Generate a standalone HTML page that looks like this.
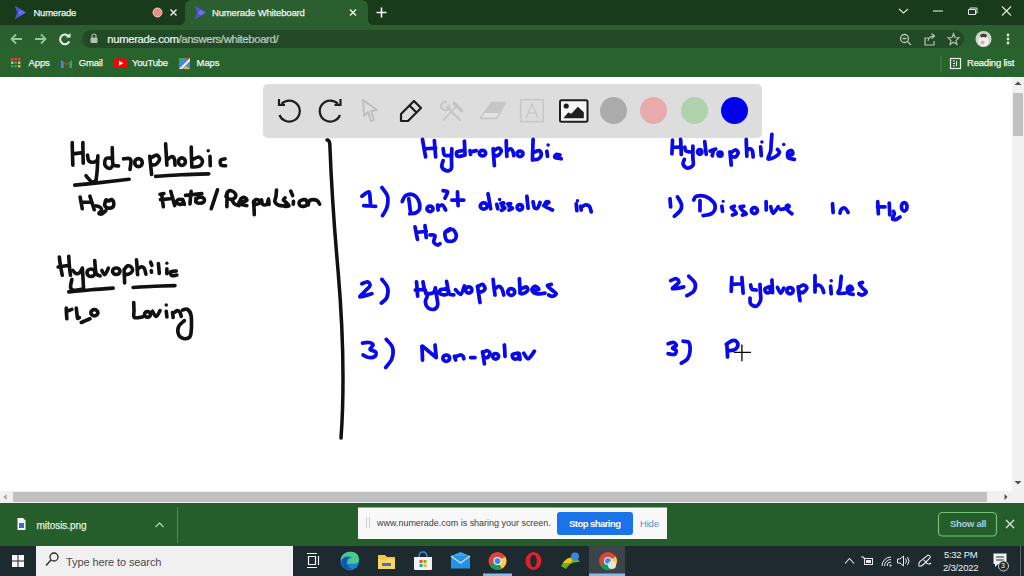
<!DOCTYPE html>
<html><head><meta charset="utf-8">
<style>
*{margin:0;padding:0;box-sizing:border-box}
html,body{width:1024px;height:576px;overflow:hidden;background:#fff;font-family:"Liberation Sans",sans-serif}
.a{position:absolute}
.t{position:absolute;white-space:nowrap;line-height:1}
#tabs{left:0;top:0;width:1024px;height:25px;background:#193b1b}
#tb{left:0;top:25px;width:1024px;height:24px;background:#2b5f30}
#omni{left:82px;top:30px;width:882px;height:18px;background:#234a27;border-radius:10px}
#bm{left:0;top:48px;width:1024px;height:29px;background:#28632d}
#content{left:0;top:77px;width:1024px;height:415px;background:#fff}
#vsb{left:1012px;top:77px;width:12px;height:426px;background:#f1f1f1}
#hsb{left:0;top:491px;width:1012px;height:12px;background:#f1f1f1}
#dl{left:0;top:503px;width:1024px;height:43px;background:#265e2b}
#task{left:0;top:546px;width:1024px;height:30px;background:#1d2a2f}
.wt{color:#eef5ee;-webkit-text-stroke:0.25px #eef5ee}
</style></head><body>
<div id="tabs" class="a"></div>
<div id="tb" class="a"></div>
<div id="omni" class="a"></div>
<div id="bm" class="a"></div>
<div id="content" class="a"></div>
<div id="vsb" class="a"></div>
<div id="hsb" class="a"></div>
<div id="dl" class="a"></div>
<div id="task" class="a"></div>

<!-- header svg -->
<svg class="a" style="left:0;top:0" width="1024" height="77" viewBox="0 0 1024 77">
  <!-- active tab -->
  <path d="M179 25 Q185 25 185 19 L185 7 Q185 0 192 0 L361 0 Q368 0 368 7 L368 19 Q368 25 374 25 Z" fill="#2b5f30"/>
  <!-- numerade icons -->
  <g id="nm">
    <path d="M15 6 L26 12.5 L15 19 L18 12.5 Z" fill="#6b6bf5"/>
    <path d="M15 6 L21 9.5 L17 12.5 Z M17 12.5 L21 15.5 L15 19 Z" fill="#4f4fe0"/>
  </g>
  <use href="#nm" x="180" y="0"/>
  <!-- record dot -->
  <circle cx="157.5" cy="12.5" r="4.5" fill="#e88c8c" stroke="#f3c9c9" stroke-width="1"/>
  <!-- close x tab1 -->
  <path d="M170.5 9.5 L176.5 15.5 M176.5 9.5 L170.5 15.5" stroke="#eef3ee" stroke-width="1.4"/>
  <path d="M350 9.5 L356 15.5 M356 9.5 L350 15.5" stroke="#eef3ee" stroke-width="1.4"/>
  <!-- plus -->
  <path d="M381.5 7.5 V17.5 M376.5 12.5 H386.5" stroke="#f4f8f4" stroke-width="1.6"/>
  <!-- window controls -->
  <path d="M899 9 L903.5 13 L908 9" stroke="#dfe9df" stroke-width="1.1" fill="none"/>
  <path d="M933 11 H943" stroke="#dfe9df" stroke-width="1.1"/>
  <path d="M968.5 9.5 H975.5 V14.5 H968.5 Z M970 9.5 V8 H977 V13 H975.5" stroke="#dfe9df" stroke-width="1" fill="none"/>
  <path d="M1002 6.5 L1011 15.5 M1011 6.5 L1002 15.5" stroke="#dfe9df" stroke-width="1.1"/>
  <!-- toolbar icons -->
  <path d="M22 39 H11.5 M16 34.5 L11.5 39 L16 43.5" stroke="#98c49b" stroke-width="1.8" fill="none"/>
  <path d="M35 39 H45.5 M41 34.5 L45.5 39 L41 43.5" stroke="#98c49b" stroke-width="1.8" fill="none"/>
  <path d="M68.8 36.5 A4.8 4.8 0 1 0 69.3 41.3" stroke="#e8f5e8" stroke-width="2" fill="none"/>
  <path d="M65.5 37.5 L70.5 37.5 L70.5 33 Z" fill="#e8f5e8"/>
  <!-- lock -->
  <rect x="90.5" y="37.5" width="7" height="5.5" rx="1" fill="#aec4ae"/>
  <path d="M92 37.5 V36 A2 2 0 0 1 96 36 V37.5" stroke="#aec4ae" stroke-width="1.2" fill="none"/>
  <!-- right toolbar icons -->
  <circle cx="904.5" cy="38.5" r="4" stroke="#b4c8b4" stroke-width="1.3" fill="none"/>
  <path d="M902.5 38.5 H906.5 M907.5 41.5 L911 45" stroke="#b4c8b4" stroke-width="1.3"/>
  <path d="M929 38 H925 V45 H934 V41 M928 41 Q929 36 934 36 M931.5 33.5 L934.5 36 L931.5 38.5" stroke="#b4c8b4" stroke-width="1.2" fill="none"/>
  <path d="M953.5 33.5 L955 37.5 L959 37.8 L956 40.5 L957 44.5 L953.5 42.2 L950 44.5 L951 40.5 L948 37.8 L952 37.5 Z" stroke="#b4c8b4" stroke-width="1.1" fill="none"/>
  <circle cx="983.5" cy="39" r="8" fill="#c9d9c2"/>
  <ellipse cx="983.5" cy="41" rx="5.2" ry="5.5" fill="#f2eef0"/>
  <path d="M980 35 Q983.5 32 987 35 L986 37.5 Q983.5 36.5 981 37.5 Z" fill="#4a3a3a"/>
  <circle cx="982.5" cy="42.5" r="2" fill="#e5a5b5"/>
  <circle cx="1008" cy="35" r="1.4" fill="#d2ecd2"/>
  <circle cx="1008" cy="39" r="1.4" fill="#d2ecd2"/>
  <circle cx="1008" cy="43" r="1.4" fill="#d2ecd2"/>
  <!-- bookmarks icons -->
  <g>
    <rect x="11" y="58" width="2.4" height="2.4" fill="#e94235"/><rect x="14.5" y="58" width="2.4" height="2.4" fill="#e94235"/><rect x="18" y="58" width="2.4" height="2.4" fill="#e94235"/>
    <rect x="11" y="61.5" width="2.4" height="2.4" fill="#f9bb2d"/><rect x="14.5" y="61.5" width="2.4" height="2.4" fill="#4285f4"/><rect x="18" y="61.5" width="2.4" height="2.4" fill="#f9bb2d"/>
    <rect x="11" y="65" width="2.4" height="2.4" fill="#34a853"/><rect x="14.5" y="65" width="2.4" height="2.4" fill="#34a853"/><rect x="18" y="65" width="2.4" height="2.4" fill="#f9bb2d"/>
  </g>
  <g>
    <path d="M61 60 V68 H63.5 V62.5 L66.5 65 L69.5 62.5 V68 H72 V60 L66.5 64 Z" fill="#ea4335"/>
    <path d="M61 60 V68 H63.5 V62.5 Z" fill="#4285f4"/>
    <path d="M72 60 V68 H69.5 V62.5 Z" fill="#34a853"/>
  </g>
  <rect x="114" y="58.5" width="13" height="9.5" rx="2.5" fill="#ff0000"/>
  <path d="M119 60.8 L123.5 63.2 L119 65.6 Z" fill="#fff"/>
  <g>
    <path d="M179 58 H190 V69 H179 Z" fill="#4285f4"/>
    <path d="M179 58 H185 L179 64 Z" fill="#34a853"/>
    <path d="M185 58 H190 V63 Z" fill="#ea4335"/>
    <path d="M179 69 L190 58 V61 L182 69 Z" fill="#f4f4f4"/>
    <path d="M186 66 L190 69 H183 Z" fill="#fbbc04"/>
  </g>
  <path d="M941 56 V72" stroke="#4a7a4e" stroke-width="1"/>
  <rect x="950.5" y="58.5" width="10" height="10" stroke="#e5efe5" stroke-width="1.2" fill="none"/>
  <path d="M953 61 H955 M953 63.5 H955 M953 66 H955 M956.5 61 V66" stroke="#e5efe5" stroke-width="1"/>
</svg>
<div class="t wt" style="left:33.4px;top:7.6px;font-size:9.5px;letter-spacing:-0.2px">Numerade</div>
<div class="t wt" style="left:212px;top:7.6px;font-size:9.5px;letter-spacing:-0.15px">Numerade Whiteboard</div>
<div class="t" style="left:107.3px;top:33.6px;font-size:11.3px;letter-spacing:-0.35px;color:#eef4ee;-webkit-text-stroke:0.2px #eef4ee">numerade.com<span style="color:#a4b9a5">/answers/whiteboard/</span></div>
<div class="t wt" style="left:28.5px;top:58px;font-size:9.5px;letter-spacing:-0.1px">Apps</div>
<div class="t wt" style="left:78.7px;top:58px;font-size:9.5px;letter-spacing:-0.15px">Gmail</div>
<div class="t wt" style="left:132px;top:58px;font-size:9.5px;letter-spacing:-0.2px">YouTube</div>
<div class="t wt" style="left:196.6px;top:58px;font-size:9.5px;letter-spacing:-0.1px">Maps</div>
<div class="t wt" style="left:967px;top:58px;font-size:9.5px;letter-spacing:-0.2px">Reading list</div>

<!-- whiteboard toolbar -->
<div class="a" style="left:262.5px;top:84px;width:499px;height:54px;background:#dddddd;border-radius:5px"></div>
<svg class="a" style="left:0;top:77px" width="1024" height="426" viewBox="0 77 1024 426">
  <!-- undo -->
  <path d="M281.5 104 A10.5 10.5 0 1 1 279.5 115" stroke="#1e1e1e" stroke-width="2.2" fill="none"/>
  <path d="M279 99 V105 H285" stroke="#1e1e1e" stroke-width="2.2" fill="none"/>
  <!-- redo -->
  <path d="M338 104 A10.5 10.5 0 1 0 340 115" stroke="#1e1e1e" stroke-width="2.2" fill="none"/>
  <path d="M340.5 99 V105 H334.5" stroke="#1e1e1e" stroke-width="2.2" fill="none"/>
  <!-- cursor -->
  <path d="M363 100 L377 110 L371 111 L374 120 L371 121 L368 112 L364 116 Z" stroke="#bdbdbd" stroke-width="1.8" fill="none" stroke-linejoin="round"/>
  <!-- pencil -->
  <path d="M401 121 V114 L414 101 L421 108 L408 121 Z M409.5 105.5 L416.5 112.5" stroke="#1e1e1e" stroke-width="2.2" fill="none" stroke-linejoin="round"/>
  <!-- tools -->
  <g stroke="#c4c4c4" fill="none" stroke-linecap="round">
    <path d="M443.5 120 L456 106.5 M460 120 L446.5 106.5" stroke-width="1.8"/>
    <path d="M454.5 103.5 L461.5 110.5" stroke-width="3.6"/>
    <path d="M446 102 A4.2 4.2 0 1 0 449.5 105.5" stroke-width="1.8"/>
  </g>
  <!-- eraser -->
  <path d="M491.5 102.5 L505.5 102.5 L496.5 118.5 L480.5 118.5 Z" fill="#c6c6c6" stroke="#c6c6c6" stroke-width="1.6" stroke-linejoin="round"/>
  <path d="M484.5 112.5 L500 112.5 L496.5 118 L481 118 Z" fill="#e2e2e2" stroke="#c6c6c6" stroke-width="1.2" stroke-linejoin="round"/>
  <!-- text box -->
  <rect x="520.7" y="99.7" width="22.6" height="22" stroke="#c8c8c8" stroke-width="1.5" fill="none"/>
  <path d="M526 118.5 L532 103.5 L538.3 118.5 M528.3 113 H535.8" stroke="#c8c8c8" stroke-width="1.4" fill="none"/>
  <!-- image -->
  <rect x="560" y="100.2" width="27.5" height="21.5" rx="1.5" fill="#f6f6f6" stroke="#1e1e1e" stroke-width="2" />
  <circle cx="566.2" cy="106" r="2.6" fill="#1e1e1e"/>
  <path d="M563.4 118.2 L568.1 112.6 L571.3 113.8 L577.9 106.7 L583.8 112.2 V118.2 Z" fill="#1e1e1e"/>
  <!-- color circles -->
  <circle cx="613.5" cy="110.5" r="13.5" fill="#ababab"/>
  <circle cx="653.5" cy="110.5" r="13.5" fill="#e8abab"/>
  <circle cx="694.5" cy="110.5" r="13.5" fill="#b0d1ae"/>
  <circle cx="734.5" cy="110.5" r="13.5" fill="#0000f0"/>
  <!-- vertical divider -->
  <path d="M327 140 Q329.5 140 329.8 144 C331 175 334 225 338 270 C341 305 343 350 343 378 C343 405 342 425 341 438" stroke="#111" stroke-width="3.5" fill="none" stroke-linecap="round"/>
  <!-- crosshair -->
  <path d="M733.8 352.3 H751 M741.9 344.4 V361.3" stroke="#000" stroke-width="1.3"/>
  <g transform="translate(56,132) scale(0.125)" stroke="#111" stroke-width="29" fill="none" stroke-linecap="round" stroke-linejoin="round"><ellipse cx="660" cy="245" rx="30" ry="32"/><path d="M130 85C130 100 131 145 132 175C133 205 134 250 135 265M135 175L215 165M215 85C215 99 216 142 216 170C216 198 218 237 218 250M252 185C254 192 254 220 262 230C270 240 289 243 300 242C311 241 325 228 330 225M335 190C334 208 332 267 330 300C328 333 322 375 320 390M240 350C248 358 272 391 285 398C298 405 314 391 320 390M450 210C442 210 410 203 400 212C390 221 387 252 392 265C397 278 419 292 430 292C441 292 453 267 458 262M450 125C450 138 451 177 452 200C453 223 450 250 458 262C466 274 493 270 500 272M540 215C548 214 575 209 585 212C595 215 599 220 600 235C601 250 593 289 592 300M750 195C751 208 756 246 758 270C760 294 764 328 765 340M755 210C763 206 793 183 805 185C817 187 830 207 828 220C826 233 807 256 795 262C783 268 763 259 757 258M150 425C183 422 278 413 350 405C422 397 546 382 585 378"/></g>
<g transform="translate(150,132) scale(0.125)" stroke="#111" stroke-width="29" fill="none" stroke-linecap="round" stroke-linejoin="round"><ellipse cx="255" cy="237" rx="28" ry="30"/><circle cx="466" cy="150" r="14" fill="#111" stroke="none"/><path d="M125 95C126 109 128 152 130 180C132 208 134 251 135 265M135 225C141 220 160 200 170 198C180 196 190 204 195 215C200 226 199 257 200 265M330 120C330 133 331 173 332 200C333 227 334 267 335 280M335 225C344 221 374 199 388 200C402 201 418 220 420 232C422 244 410 264 398 272C386 280 354 279 345 280M480 195L482 270M600 215C594 217 570 217 565 225C560 233 561 258 568 265C575 272 599 269 605 270M45 355C79 353 179 345 250 342C321 339 433 336 470 335"/></g>
<g transform="translate(64,180) scale(0.125)" stroke="#111" stroke-width="29" fill="none" stroke-linecap="round" stroke-linejoin="round"><path d="M129 136C130 144 135 169 138 185C141 201 145 222 146 230M140 178L207 178M207 129C210 138 219 167 225 185C231 203 239 229 242 238M256 207C262 209 282 213 290 219C298 225 304 234 302 242C300 250 278 262 279 267C280 272 296 275 305 271C314 267 330 249 335 245M328 190C329 185 330 164 335 160C340 156 350 169 358 168C366 167 373 153 380 156C387 159 397 175 398 185C399 195 396 212 388 218C380 224 362 226 352 224C342 222 330 213 326 205C322 197 329 180 330 175"/></g>
<g transform="translate(150,180) scale(0.125)" stroke="#111" stroke-width="29" fill="none" stroke-linecap="round" stroke-linejoin="round"><path d="M80 114L111 109M93 114C94 122 98 147 100 164C102 181 106 206 107 214M84 157L161 150M166 91C169 100 177 129 182 148C187 167 195 196 198 205M261 159C256 158 237 152 229 155C221 158 210 170 211 177C212 184 229 194 238 195C247 196 262 189 266 182C270 175 260 153 261 155C262 157 273 188 275 195M329 91C328 99 326 124 324 141C322 158 321 183 320 191M284 123L415 109M365 150C371 148 391 137 402 137C413 137 428 143 433 150C438 157 436 171 429 177C422 183 403 187 392 186C381 185 368 179 365 173C362 167 372 154 374 150M540 78C536 91 523 130 515 155C507 180 494 218 490 230M617 100C617 109 616 136 616 155C616 174 615 204 615 214M608 132C610 126 614 104 621 96C628 88 642 84 653 87C664 90 680 105 685 114C690 123 685 134 680 141C675 148 662 154 653 155C644 156 630 151 626 150M653 155C657 161 666 183 676 191C686 199 706 203 712 205M712 177C718 176 738 175 748 173C758 171 772 168 775 164C778 160 772 150 766 146C760 142 746 138 739 141C732 144 722 155 721 164C720 173 721 188 730 195C739 202 768 203 775 205"/></g>
<g transform="translate(230,180) scale(0.125)" stroke="#111" stroke-width="29" fill="none" stroke-linecap="round" stroke-linejoin="round"><path d="M190 168C190 177 191 205 192 223C193 241 194 268 194 277M188 177C191 174 200 159 208 157C216 155 230 159 235 164C240 169 242 181 237 186C232 191 213 194 208 195M253 159C254 165 255 189 262 195C269 201 286 202 294 195C302 188 305 150 308 150C311 150 311 188 312 195M372 80C371 88 370 114 368 130C366 146 355 163 359 175C363 187 379 197 390 202C401 207 415 207 427 207C439 207 457 203 463 202M440 143C438 146 425 154 427 161C429 168 446 176 454 184C462 192 474 202 472 207C470 212 445 210 440 211M486 89L501 125M508 170L506 193M590 157C585 159 563 162 558 170C553 178 553 195 558 202C563 209 580 212 590 211C600 210 614 201 617 193C620 185 612 167 608 161C604 155 593 158 590 157M626 198C628 193 629 173 635 166C641 159 651 157 662 157C673 157 690 160 699 166C708 172 714 188 717 193"/></g>
<g transform="translate(50,250) scale(0.125)" stroke="#111" stroke-width="29" fill="none" stroke-linecap="round" stroke-linejoin="round"><ellipse cx="328" cy="182" rx="32" ry="30"/><ellipse cx="530" cy="170" rx="30" ry="26"/><circle cx="935" cy="105" r="13" fill="#111" stroke="none"/><path d="M75 56C76 68 80 103 84 127C88 151 96 190 98 202M65 136L155 122M150 51C151 64 153 102 155 127C157 152 162 190 164 202M183 164C187 168 198 185 207 188C216 191 226 190 235 183C244 176 255 151 259 145M259 145C260 158 262 194 264 221C266 248 267 295 268 310M175 235C173 246 162 286 165 300C168 314 173 320 190 322C207 324 255 312 268 310M358 84C359 95 361 132 363 150C365 168 366 184 372 193C378 202 396 205 401 207M415 164C419 170 429 200 438 197C447 194 462 154 467 145M593 155C593 164 594 194 595 212C596 230 597 255 597 264M595 155C599 150 611 129 621 127C631 125 648 134 654 141C660 148 663 160 659 169C655 178 640 189 630 193C620 197 602 193 597 193M692 79C693 89 696 121 697 141C698 161 700 188 701 197M701 155C705 152 716 138 725 136C734 134 746 136 753 145C760 154 765 185 767 193M805 98L815 122M810 164L812 178M867 108C868 115 870 137 871 150C872 163 874 182 874 188M935 150L935 190M1010 168C1002 169 971 169 965 175C959 181 967 201 975 205C983 209 1008 201 1015 200M150 335C180 332 271 323 330 318C389 313 476 307 505 305M665 300C694 298 784 292 840 290C896 288 973 286 1000 285M130 465C130 472 131 496 132 510C133 524 134 543 135 550M135 490L175 475M210 465C211 472 213 492 215 505C217 518 217 539 220 545C223 551 232 541 235 540"/></g>
<g transform="translate(80,280) scale(0.125)" stroke="#111" stroke-width="29" fill="none" stroke-linecap="round" stroke-linejoin="round"><ellipse cx="115" cy="262" rx="28" ry="25"/><ellipse cx="540" cy="275" rx="24" ry="22"/><circle cx="690" cy="200" r="14" fill="#111" stroke="none"/><path d="M10 340C16 338 33 330 45 325C57 320 74 312 80 310M430 180C430 190 431 220 432 240C433 260 424 291 435 300C446 309 489 296 500 295M580 250C585 257 600 293 610 292C620 291 635 253 640 245M690 250L695 295M740 260L745 300M745 265C751 262 771 246 780 245C789 244 795 252 800 260C805 268 808 285 810 290M820 240C827 239 848 227 860 235C872 243 886 256 890 290C894 324 893 410 885 440C877 470 856 470 840 470C824 470 798 457 790 440C782 423 782 389 790 370C798 351 828 332 835 325"/></g>
<g transform="translate(410,130) scale(0.125)" stroke="#0a0ae6" stroke-width="30" fill="none" stroke-linecap="round" stroke-linejoin="round"><ellipse cx="580" cy="185" rx="25" ry="22"/><path d="M100 75C102 87 108 122 112 145C116 168 123 203 125 215M120 150L205 145M195 85C196 96 198 128 200 150C202 172 204 204 205 215M265 150C267 158 267 191 275 200C283 209 308 204 315 205M335 150C334 163 333 203 332 230C331 257 337 294 330 310C323 326 302 328 290 325C278 322 259 308 255 295C251 282 263 253 265 245M420 165C412 167 382 168 375 175C368 182 372 205 380 210C388 215 418 206 425 205M435 90C436 100 437 132 438 150C439 168 440 192 440 200M480 165L485 195M485 175L530 165"/></g>
<g transform="translate(480,130) scale(0.125)" stroke="#0a0ae6" stroke-width="30" fill="none" stroke-linecap="round" stroke-linejoin="round"><ellipse cx="320" cy="190" rx="24" ry="22"/><circle cx="545" cy="120" r="14" fill="#0a0ae6" stroke="none"/><path d="M105 150C106 162 108 198 110 220C112 242 114 274 115 285M110 165C117 162 140 144 150 145C160 146 172 160 170 170C168 180 150 200 140 205C130 210 115 201 110 200M210 85C210 96 211 129 212 150C213 171 214 200 215 210M215 170C220 167 237 149 245 150C253 151 261 166 265 175C269 184 269 200 270 205M425 75C424 89 423 132 422 160C421 188 420 227 420 240M425 180C433 178 464 162 475 165C486 168 492 188 490 200C488 212 472 229 460 235C448 241 427 235 420 235M535 170L540 210M640 200C635 199 617 192 610 195C603 198 593 214 600 220C607 226 642 228 650 230"/></g>
<g transform="translate(350,180) scale(0.125)" stroke="#0a0ae6" stroke-width="30" fill="none" stroke-linecap="round" stroke-linejoin="round"><ellipse cx="640" cy="230" rx="24" ry="22"/><path d="M95 130C104 124 139 93 150 95C161 97 158 122 160 140C162 158 164 194 165 205M110 205C118 206 144 207 160 208C176 209 198 210 205 210M255 60C262 72 293 103 300 130C307 157 302 194 295 220C288 246 266 274 260 285M418 172C422 164 430 134 445 125C460 116 488 112 505 118C522 124 539 144 548 162C557 180 561 211 558 228C555 245 541 255 528 262C515 269 486 269 478 270M470 150C471 160 476 191 478 210C480 229 484 256 485 265M700 200L705 240M705 215C711 212 731 198 740 200C749 202 756 223 760 230C764 237 764 238 765 240M745 85C751 87 778 85 780 95C782 105 763 137 760 145M860 95C860 104 861 132 862 150C863 168 864 196 865 205M815 160L910 160M520 375C522 383 527 408 530 425C533 442 538 467 540 475M530 420L610 410M600 365C601 372 603 394 605 410C607 426 609 452 610 460M640 440C647 441 675 436 680 445C685 454 667 482 670 495C673 508 692 518 700 520C708 522 717 512 720 510M800 390C793 395 764 404 760 420C756 436 763 474 775 485C787 496 818 492 830 485C842 478 852 455 850 440C848 425 832 400 820 395C808 390 787 408 780 410"/></g>
<g transform="translate(460,180) scale(0.125)" stroke="#0a0ae6" stroke-width="30" fill="none" stroke-linecap="round" stroke-linejoin="round"><ellipse cx="190" cy="208" rx="28" ry="25"/><circle cx="317" cy="155" r="14" fill="#0a0ae6" stroke="none"/><ellipse cx="479" cy="218" rx="22" ry="22"/><path d="M224 110C226 120 232 150 235 170C238 190 243 220 245 230M294 195L302 230M327 186C331 186 348 180 350 184C352 188 334 201 336 208C338 215 361 218 360 224C359 230 337 240 332 243M382 192C386 192 403 186 405 189C407 192 390 204 392 210C394 216 420 221 420 226C420 231 397 238 392 240M535 130C536 138 538 164 540 180C542 196 544 218 545 225M585 175C587 182 589 212 595 220C601 228 612 232 620 225C628 218 637 188 640 180M670 205C677 201 707 185 710 180C713 175 695 170 690 175C685 180 672 199 680 210C688 221 730 235 740 240"/></g>
<g transform="translate(530,170) scale(0.125)" stroke="#0a0ae6" stroke-width="30" fill="none" stroke-linecap="round" stroke-linejoin="round"><circle cx="380" cy="245" r="14" fill="#0a0ae6" stroke="none"/><path d="M370 270L375 325M405 290L410 320M410 300C415 297 429 282 440 280C451 278 467 281 475 290C483 299 488 328 490 335"/></g>
<g transform="translate(350,260) scale(0.125)" stroke="#0a0ae6" stroke-width="30" fill="none" stroke-linecap="round" stroke-linejoin="round"><path d="M95 190C102 188 129 172 140 175C151 178 163 192 160 205C157 218 133 235 120 250C107 265 71 292 80 295C89 298 159 274 175 270M255 155C262 166 293 196 300 220C307 244 303 279 295 300C287 321 258 338 250 345M532 175C533 184 536 213 537 232C538 251 540 280 541 289M523 241C532 240 562 237 575 237C588 237 598 240 603 241M584 175C586 183 589 207 593 223C597 239 606 262 608 270M608 260C612 262 621 270 631 270C641 270 660 268 669 260C678 252 681 229 683 223M683 223C685 234 690 267 693 289C696 311 704 338 702 355C700 372 691 388 678 393C665 398 638 392 626 383C614 374 604 351 603 336C602 321 615 300 617 293"/></g>
<g transform="translate(440,260) scale(0.125)" stroke="#0a0ae6" stroke-width="30" fill="none" stroke-linecap="round" stroke-linejoin="round"><ellipse cx="230" cy="240" rx="25" ry="25"/><ellipse cx="570" cy="255" rx="28" ry="27"/><path d="M39 232C34 233 13 232 6 237C-1 242 -8 258 -4 265C-0 272 18 278 29 279C40 280 56 276 62 270C68 264 71 252 67 246C63 240 44 234 39 232M53 171C54 180 59 206 62 223C65 240 64 261 72 270C80 279 104 278 110 279M124 237C131 243 154 279 166 274C178 269 190 219 195 208M300 210C302 221 307 253 310 275C313 297 318 329 320 340M300 215C307 212 330 192 340 195C350 198 362 220 360 230C358 240 339 252 330 255C321 258 309 251 305 250M425 155C426 166 430 199 432 220C434 241 439 270 440 280M440 230C445 227 461 210 470 210C479 210 488 218 495 230C502 242 508 272 510 280M635 150C636 159 637 187 638 205C639 223 640 251 640 260M640 235C648 232 680 213 690 215C700 217 705 236 700 245C695 254 670 267 660 270C650 273 643 266 640 265M740 245C748 243 787 241 790 235C793 229 769 209 760 210C751 211 733 230 735 240C737 250 752 266 770 270C788 274 828 266 840 265M890 195C885 197 859 198 860 205C861 212 883 229 895 240C907 251 929 262 930 270C931 278 910 288 900 290C890 292 875 282 870 280"/></g>
<g transform="translate(350,320) scale(0.125)" stroke="#0a0ae6" stroke-width="30" fill="none" stroke-linecap="round" stroke-linejoin="round"><ellipse cx="770" cy="305" rx="27" ry="25"/><path d="M100 185C108 184 136 178 150 180C164 182 183 191 185 200C187 209 157 226 160 235C163 244 198 246 205 255C212 264 209 282 200 290C191 298 166 302 150 300C134 298 112 283 105 280M290 155C298 166 332 194 340 220C348 246 344 283 335 310C326 337 293 368 285 380M575 210C576 219 577 247 578 265C579 283 580 311 580 320M580 210C589 218 617 240 635 255C653 270 681 292 690 300M680 200C681 208 683 233 685 250C687 267 689 292 690 300M835 290L845 320M845 295C851 292 870 281 880 280C890 279 900 285 905 290C910 295 909 307 910 310M965 300L1000 300"/></g>
<g transform="translate(440,320) scale(0.125)" stroke="#0a0ae6" stroke-width="30" fill="none" stroke-linecap="round" stroke-linejoin="round"><ellipse cx="445" cy="290" rx="24" ry="22"/><path d="M340 255C341 262 346 284 348 300C350 316 354 342 355 350M345 260C350 258 366 244 375 245C384 246 399 256 400 265C401 274 389 295 380 300C371 305 351 296 345 295M515 200C516 208 517 230 518 245C519 260 520 282 520 290M625 265C618 267 586 268 580 275C574 282 582 305 590 310C598 315 618 312 625 305C632 298 632 268 635 270C638 272 639 308 640 315M670 265C676 272 691 312 705 310C719 308 747 260 755 250"/></g>
<g transform="translate(660,130) scale(0.125)" stroke="#0a0ae6" stroke-width="30" fill="none" stroke-linecap="round" stroke-linejoin="round"><ellipse cx="318" cy="175" rx="17" ry="19"/><ellipse cx="480" cy="192" rx="16" ry="16"/><path d="M100 80C100 89 99 117 98 135C97 153 96 181 95 190M100 140L170 135M165 75C166 85 167 115 168 135C169 155 170 185 170 195M198 137C200 142 200 161 207 167C214 173 234 174 240 175M263 128C263 143 263 195 263 220C263 245 272 266 265 280C258 294 233 306 220 305C207 304 189 287 185 275C181 263 193 242 195 235M358 93C359 102 362 133 364 150C366 167 369 187 370 194M400 168L445 153M428 160L418 206"/></g>
<g transform="translate(720,130) scale(0.125)" stroke="#0a0ae6" stroke-width="30" fill="none" stroke-linecap="round" stroke-linejoin="round"><circle cx="335" cy="95" r="14" fill="#0a0ae6" stroke="none"/><circle cx="510" cy="115" r="14" fill="#0a0ae6" stroke="none"/><path d="M80 175C81 184 83 212 85 230C87 248 89 272 90 280M85 185C91 181 110 161 120 160C130 159 144 171 145 180C146 189 134 210 125 215C116 220 96 211 90 210M210 75C210 86 211 118 212 140C213 162 214 198 215 210M215 165C219 162 232 149 240 150C248 151 256 159 260 170C264 181 264 208 265 215M325 135L330 205M415 35C414 46 412 78 410 100C408 122 409 148 405 170C401 192 379 222 385 230C391 238 425 223 440 215C455 207 472 190 475 180C478 170 462 159 460 155M545 200C551 199 575 201 580 195C585 189 581 168 575 165C569 162 550 166 545 175C540 184 537 210 545 220C553 230 587 232 595 235"/></g>
<g transform="translate(660,180) scale(0.125)" stroke="#0a0ae6" stroke-width="30" fill="none" stroke-linecap="round" stroke-linejoin="round"><circle cx="505" cy="170" r="12" fill="#0a0ae6" stroke="none"/><ellipse cx="755" cy="245" rx="24" ry="24"/><path d="M80 150L85 215M140 135C145 144 166 172 170 190C174 208 174 223 165 240C156 257 123 282 115 290M270 160C273 155 275 135 290 130C305 125 337 122 360 130C383 138 417 163 430 180C443 197 443 215 440 230C437 245 426 261 410 270C394 279 356 282 345 285M320 165C320 172 320 192 320 205C320 218 320 238 320 245M495 210L500 250M595 210C591 212 570 214 570 220C570 226 588 237 595 245C602 253 612 264 610 270C608 276 585 278 580 280M670 210C665 211 642 209 640 215C638 221 652 236 660 245C668 254 690 264 690 270C690 276 665 278 660 280M849 173L850 240M886 214C889 223 895 266 905 266C915 266 939 223 946 214M965 235C972 234 994 232 1005 228C1016 224 1029 216 1032 212C1035 208 1026 201 1022 202C1018 203 1010 209 1010 216C1010 223 1018 236 1025 245C1032 254 1050 266 1055 270"/></g>
<g transform="translate(780,180) scale(0.125)" stroke="#0a0ae6" stroke-width="30" fill="none" stroke-linecap="round" stroke-linejoin="round"><path d="M420 190L425 260M480 265C482 260 483 242 490 235C497 228 511 221 520 225C529 229 541 254 545 260"/></g>
<g transform="translate(840,180) scale(0.125)" stroke="#0a0ae6" stroke-width="30" fill="none" stroke-linecap="round" stroke-linejoin="round"><ellipse cx="514" cy="214" rx="22" ry="34"/><path d="M302 173C302 181 303 204 304 220C305 236 306 262 307 270M300 214L360 214M394 184C394 192 395 214 396 230C397 246 398 270 398 278M428 251C429 254 436 260 435 270C434 280 418 300 420 308C422 316 440 317 450 315C460 313 475 299 480 296"/></g>
<g transform="translate(660,260) scale(0.125)" stroke="#0a0ae6" stroke-width="30" fill="none" stroke-linecap="round" stroke-linejoin="round"><path d="M85 165C92 162 119 148 130 150C141 152 155 167 150 180C145 193 93 224 100 230C107 236 175 218 190 215M230 130C238 139 273 165 280 185C287 205 281 233 270 250C259 267 224 279 215 285M575 140C574 149 573 177 572 195C571 213 570 241 570 250M575 195L655 190M655 140C656 150 658 179 660 200C662 221 664 254 665 265M725 200C727 206 728 228 735 235C742 242 764 239 770 240M800 195C800 206 802 239 803 260C804 281 810 302 805 320C800 338 783 365 770 370C757 375 733 361 725 350C717 339 721 312 720 305"/></g>
<g transform="translate(760,260) scale(0.125)" stroke="#0a0ae6" stroke-width="30" fill="none" stroke-linecap="round" stroke-linejoin="round"><ellipse cx="240" cy="245" rx="25" ry="25"/><circle cx="570" cy="165" r="14" fill="#0a0ae6" stroke="none"/><path d="M70 215C65 218 43 222 40 230C37 238 42 256 50 260C58 264 81 262 85 255C89 248 77 222 75 215M95 160C96 168 97 193 98 210C99 227 100 252 100 260M140 220C144 228 157 264 165 265C173 266 186 232 190 225M305 215C306 224 310 252 312 270C314 288 319 316 320 325M310 220C317 217 339 199 350 200C361 201 376 215 375 225C374 235 355 255 345 260C335 265 320 256 315 255M440 125C440 136 440 168 440 190C440 212 440 244 440 255M440 215C445 212 461 199 470 200C479 201 488 210 495 220C502 230 508 253 510 260M565 210L570 270M650 130C649 138 647 164 645 180C643 196 643 211 640 225C637 239 618 258 625 265C632 272 671 265 680 265M710 245C715 243 738 241 740 235C742 229 732 212 725 210C718 208 702 216 700 225C698 234 702 257 710 265C718 273 739 273 745 275M820 180C816 182 795 182 795 190C795 198 811 214 820 225C829 236 850 246 850 255C850 264 830 278 820 280C810 282 795 272 790 270"/></g>
<g transform="translate(660,320) scale(0.125)" stroke="#0a0ae6" stroke-width="30" fill="none" stroke-linecap="round" stroke-linejoin="round"><path d="M65 190C72 188 99 178 110 180C121 182 132 198 130 205C128 212 100 218 100 225C100 232 128 237 130 245C132 253 126 271 115 275C104 279 73 271 65 270M185 170C192 172 221 167 230 180C239 193 242 228 240 250C238 272 232 294 220 310C208 326 178 339 170 345M535 200C536 208 537 234 538 250C539 266 540 288 540 295M530 195C538 190 566 168 580 165C594 162 608 167 615 175C622 183 624 204 620 215C616 226 602 235 590 240C578 245 552 244 545 245"/></g>
  <!-- scrollbars -->
  <rect x="1013" y="93" width="10" height="43" fill="#c1c1c1"/>
  <path d="M1014.5 85 L1018 81.5 L1021.5 85 Z" fill="#505050"/>
  <path d="M1014.5 481 L1018 484.5 L1021.5 481 Z" fill="#505050"/>
  <rect x="13" y="492" width="974" height="10" fill="#c1c1c1"/>
  <path d="M6.5 494 L3.5 497 L6.5 500 Z" fill="#a0a0a0"/>
  <path d="M1004.5 494 L1007.5 497 L1004.5 500 Z" fill="#505050"/>
</svg>

<!-- download bar -->
<svg class="a" style="left:0;top:503px" width="1024" height="73" viewBox="0 503 1024 73">
  <path d="M17.5 518 H23 L25.5 520.5 V530 H17.5 Z" fill="#f4f7fa"/>
  <rect x="19" y="523" width="5" height="5" fill="#3b6fc2"/>
  <path d="M155.5 527 L159.5 523 L163.5 527" stroke="#b5cdb6" stroke-width="1.3" fill="none"/>
  <path d="M177.5 507 V543" stroke="#4f8a53" stroke-width="1"/>
  <rect x="358" y="507.5" width="309" height="31.5" fill="#f8f8f8"/>
  <path d="M366.5 517 V528 M369.5 517 V528" stroke="#cfcfcf" stroke-width="1"/>
  <rect x="557" y="512" width="76" height="23" rx="3" fill="#1a73e8"/>
  <rect x="938.5" y="512.5" width="58" height="23.5" rx="4" stroke="#73c177" stroke-width="1.2" fill="none"/>
  <path d="M1006 520 L1014 528 M1014 520 L1006 528" stroke="#d6e6d6" stroke-width="1.4"/>
  <!-- taskbar -->
  <g fill="#f4f6f8">
    <rect x="12" y="555" width="5.5" height="5.5"/><rect x="18.5" y="555" width="5.5" height="5.5"/>
    <rect x="12" y="561.5" width="5.5" height="5.5"/><rect x="18.5" y="561.5" width="5.5" height="5.5"/>
  </g>
  <rect x="36" y="546" width="257" height="30" fill="#f0f0f0"/>
  <circle cx="54" cy="557" r="4" stroke="#2a2a2a" stroke-width="1.3" fill="none"/>
  <path d="M51 560 L46 565.5" stroke="#2a2a2a" stroke-width="1.4"/>
  <!-- task view -->
  <path d="M307 553.5 H317 M307 567.5 H317 M308.5 556.5 H315.5 V564.5 H308.5 Z M318.5 556 V565" stroke="#eef2f4" stroke-width="1.2" fill="none"/>
  <!-- edge -->
  <circle cx="349.8" cy="561" r="9.3" fill="#1b7fd6"/>
  <path d="M341 557.5 Q344 551.5 351 551.7 Q358.5 552 359.2 559.5 Q359 563.5 354.5 563.8 L347 563.8 Q347.5 558 352.5 558 Q350 555.5 345.5 556.5 Q342.5 557.5 341 561 Z" fill="#4cc98a"/>
  <path d="M347 563.8 Q348 568 353 569 Q347 571 343.5 567 Q341 564 341.5 560 Q344 556.5 349 557 Q346 559 347 563.8 Z" fill="#0d5aa8"/>
  <!-- explorer -->
  <path d="M378 555 H385 L387 557 H395 V569 H378 Z" fill="#f6c342"/>
  <rect x="378" y="559" width="17" height="10" fill="#fcd462"/>
  <rect x="382" y="563" width="9" height="3" fill="#2b7bd3"/>
  <!-- store -->
  <path d="M414 557 H432 V569 Q432 570 431 570 H415 Q414 570 414 569 Z" fill="#f3f3f3"/>
  <path d="M419 557 Q419 552 423 552 Q427 552 427 557" stroke="#3d8de0" stroke-width="1.3" fill="none"/>
  <rect x="419.5" y="560" width="3" height="3" fill="#f25022"/><rect x="423.5" y="560" width="3" height="3" fill="#7fba00"/>
  <rect x="419.5" y="564" width="3" height="3" fill="#00a4ef"/><rect x="423.5" y="564" width="3" height="3" fill="#ffb900"/>
  <!-- mail -->
  <rect x="451" y="556" width="19" height="12.5" fill="#2592e4"/>
  <path d="M451 556 L460.5 563 L470 556" stroke="#cde8fb" stroke-width="1.2" fill="none"/>
  <path d="M451 556 L460.5 552 L470 556 Z" fill="#3ea4ee"/>
  <!-- chrome -->
  <g id="chr">
    <circle cx="497.5" cy="561" r="9" fill="#db4437"/>
    <path d="M497.5 561 L489.7 565.5 A9 9 0 0 0 502 568.8 Z" fill="#0f9d58"/>
    <path d="M497.5 561 L502 568.8 A9 9 0 0 0 505.3 556.5 Z" fill="#ffcd40"/>
    <circle cx="497.5" cy="561" r="4" fill="#fff"/>
    <circle cx="497.5" cy="561" r="3" fill="#4285f4"/>
  </g>
  <rect x="483" y="573.5" width="29" height="2.5" fill="#8ab9e8"/>
  <!-- opera -->
  <ellipse cx="533.5" cy="561" rx="8" ry="9" fill="#e0202a"/>
  <ellipse cx="533.5" cy="561" rx="3.3" ry="6.2" fill="#1f2b2f"/>
  <!-- idm -->
  <path d="M561 566 Q566 556 576 557 L580 562 Q570 561 566 569 Z" fill="#6ab023"/>
  <path d="M563 563 Q568 556 573 559 L571 563 Z" fill="#f2c21a"/>
  <circle cx="575" cy="556.5" r="4" fill="#3c88d8"/>
  <!-- active chrome -->
  <rect x="589" y="546" width="36" height="30" fill="#3b4549"/>
  <use href="#chr" x="110.5" y="0"/>
  <circle cx="612" cy="565" r="4" fill="#e8e2da"/>
  <rect x="589" y="573.5" width="36" height="2.5" fill="#8ab9e8"/>
  <!-- tray -->
  <path d="M845 563.5 L849.5 558.5 L854 563.5" stroke="#e8ecee" stroke-width="1.1" fill="none"/>
  <rect x="864.5" y="558.5" width="8" height="6" stroke="#e8ecee" stroke-width="1" fill="none"/>
  <rect x="866" y="560" width="5" height="3" fill="#e8ecee"/>
  <path d="M861 557 H864 V559" stroke="#e8ecee" stroke-width="1" fill="none"/>
  <path d="M882 566 A9 9 0 0 1 891 557 M884.5 566 A6.5 6.5 0 0 1 891 559.5 M887 566 A4 4 0 0 1 891 562" stroke="#e8ecee" stroke-width="1" fill="none"/>
  <circle cx="890.5" cy="565.5" r="1.1" fill="#e8ecee"/>
  <path d="M897.5 559 H900 L903.5 556 V566 L900 563 H897.5 Z" stroke="#e8ecee" stroke-width="1" fill="none"/>
  <path d="M905.5 558.5 Q907.5 561 905.5 563.5 M907.5 557 Q910.5 561 907.5 565" stroke="#e8ecee" stroke-width="1" fill="none"/>
  <path d="M919 566 Q918 562 922 560 L928 555 Q931 556 930 558 L924 564 Q921 567 919 566 M924 560 Q928 566 931 563" stroke="#e8ecee" stroke-width="1.1" fill="none"/>
  <!-- notification -->
  <path d="M993.5 553.5 H1006.5 V564 H998 L995 567 V564 H993.5 Z" fill="#eef2f4"/>
  <path d="M996 557 H1004 M996 560 H1004" stroke="#1f2b2f" stroke-width="1"/>
  <circle cx="1003.5" cy="566" r="5" fill="#1f2b2f" stroke="#c8ced2" stroke-width="1"/>
  <path d="M1020.5 546 V576" stroke="#59646a" stroke-width="1"/>
</svg>
<div class="t" style="left:36.5px;top:521px;font-size:10px;color:#dff0df;-webkit-text-stroke:0.25px #dff0df;letter-spacing:-0.05px">mitosis.png</div>
<div class="t" style="left:377px;top:519px;font-size:9px;color:#3c3c3c;letter-spacing:-0.02px">www.numerade.com is sharing your screen.</div>
<div class="t" style="left:569px;top:519px;font-size:9.5px;font-weight:bold;color:#fff;letter-spacing:-0.55px">Stop sharing</div>
<div class="t" style="left:640px;top:519px;font-size:9.5px;color:#6a86cc;letter-spacing:-0.2px">Hide</div>
<div class="t" style="left:950px;top:519px;font-size:9.5px;font-weight:bold;color:#a9cbe0;letter-spacing:-0.3px">Show all</div>
<div class="t" style="left:66px;top:556.5px;font-size:11px;color:#4a4a4a;letter-spacing:-0.1px">Type here to search</div>
<div class="t" style="left:944px;top:550px;font-size:9.5px;color:#eef2f4;letter-spacing:-0.3px">5:32 PM</div>
<div class="t" style="left:943px;top:563px;font-size:9.5px;color:#eef2f4;letter-spacing:-0.2px">2/3/2022</div>
<div class="t" style="left:1001px;top:562px;font-size:7px;color:#fff">3</div>
</body></html>
